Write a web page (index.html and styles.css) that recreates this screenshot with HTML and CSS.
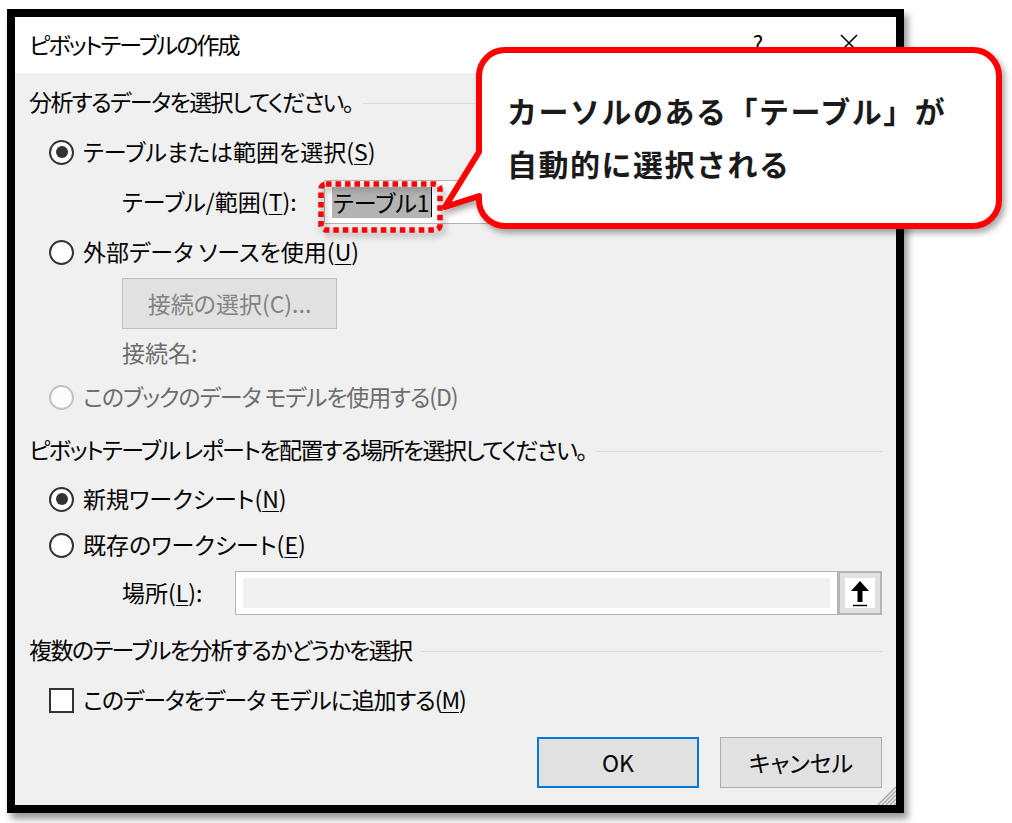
FILE: index.html
```html
<!DOCTYPE html>
<html lang="ja">
<head>
  <meta charset="UTF-8">
  <title>ピボットテーブルの作成</title>
  <link rel="stylesheet" href="styles.css">
</head>
<body>
  <div class="dialog">
    <!-- Title bar -->
    <div class="titlebar">
      <span class="title">ピボットテーブルの作成</span>
      <span class="help">?</span>
      <span class="close">
        <svg viewBox="0 0 20 20" width="20" height="20">
          <path d="M2,2 L18,18 M18,2 L2,18" stroke="#000" stroke-width="1.6" fill="none"></path>
        </svg>
      </span>
    </div>

    <div class="content">
      <!-- Source -->
      <div class="row group-head">
        <span>分析するデータを選択してください。</span>
        <i class="rule"></i>
      </div>

      <div class="row option option-tall mt-4">
        <span class="radio checked"></span>
        <span>テーブルまたは範囲を選択(<u>S</u>)</span>
      </div>

      <div class="row sub row-table mt-3">
        <span class="label-table">テーブル/範囲(<u>T</u>):</span>
        <div class="textbox">
          <span class="selection">テーブル1</span><span class="caret"></span>
        </div>
      </div>

      <div class="row option option-tall mt-3">
        <span class="radio"></span>
        <span>外部データ ソースを使用(<u>U</u>)</span>
      </div>

      <div class="row sub row-button mt-2">
        <button class="btn btn-disabled btn-connect" disabled>接続の選択(C)...</button>
      </div>

      <div class="row sub disabled-text row-short mt-6">接続名:</div>

      <div class="row option disabled-text mt-4">
        <span class="radio radio-disabled"></span>
        <span class="tight">このブックのデータ モデルを使用する(D)</span>
      </div>

      <!-- Destination -->
      <div class="row group-head mt-9">
        <span>ピボットテーブル レポートを配置する場所を選択してください。</span>
        <i class="rule"></i>
      </div>

      <div class="row option mt-5">
        <span class="radio checked"></span>
        <span>新規ワークシート(<u>N</u>)</span>
      </div>

      <div class="row option mt-2">
        <span class="radio"></span>
        <span>既存のワークシート(<u>E</u>)</span>
      </div>

      <div class="row sub mt-4">
        <span class="label-place">場所(<u>L</u>):</span>
        <div class="refedit">
          <div class="refedit-inner"></div>
        </div>
        <div class="ref-button">
          <svg viewBox="0 0 30 30" width="30" height="30">
            <rect x="0" y="0" width="30" height="30" fill="#fff"></rect>
            <path d="M15,3 L6,13 L12.5,13 L12.5,24 L17.5,24 L17.5,13 L24,13 Z" fill="#000"></path>
            <line x1="8" y1="27.5" x2="22" y2="27.5" stroke="#000" stroke-width="1.5"></line>
          </svg>
        </div>
      </div>

      <!-- Data model -->
      <div class="row group-head mt-13">
        <span>複数のテーブルを分析するかどうかを選択</span>
        <i class="rule"></i>
      </div>

      <div class="row option mt-6">
        <span class="checkbox"></span>
        <span class="tight">このデータをデータ モデルに追加する(<u>M</u>)</span>
      </div>

      <div class="actions">
        <button class="btn btn-default">OK</button>
        <button class="btn">キャンセル</button>
      </div>
    </div>

    <svg class="grip" viewBox="0 0 20 20" width="20" height="20">
      <path d="M20,2 L2,20 M20,6 L6,20 M20,10 L10,20 M20,14 L14,20 M20,18 L18,20" stroke="#a8a8a8" stroke-width="1.5"></path>
    </svg>
  </div>

  <!-- Annotation callout -->
  <svg class="annotation" viewBox="0 0 1012 823" width="1012" height="823">
    <rect x="321" y="184" width="119" height="46" rx="5" fill="none" stroke="#f00" stroke-width="5.5" stroke-dasharray="5.5 4"></rect>
    <path d="M505,50 H973 A26,26 0 0 1 999,76 V200 A26,26 0 0 1 973,226 H505 A26,26 0 0 1 479,200 V196 L445,207 L479,152 V76 A26,26 0 0 1 505,50 Z"
          fill="#fff" stroke="#f00" stroke-width="6" stroke-linejoin="round"></path>
  </svg>
  <div class="callout-text">
    カーソルのある「テーブル」が<br>
    自動的に選択される
  </div>
</body>
</html>
```

FILE: styles.css
```css
* {
  box-sizing: border-box;
}

body {
  margin: 0;
  background: #fff;
  font-family: "Noto Sans CJK JP", "Noto Sans", sans-serif;
  font-feature-settings: "palt";
  color: #000;
  position: relative;
  width: 1012px;
  height: 823px;
  overflow: hidden;
}

/* Dialog frame */
.dialog {
  position: relative;
  margin: 9px 0 0 7px;
  width: 897px;
  height: 804px;
  border: 8px solid #000;
  background: #f0f0f0;
  box-shadow: 4px 6px 7px rgba(0, 0, 0, 0.4);
  font-size: 23px;
  line-height: 1.3;
}

.titlebar {
  height: 56px;
  background: #fff;
  display: flex;
  align-items: center;
  padding: 0 24px 0 14px;
}

.title {
  letter-spacing: -2px;
}

.help {
  margin-left: auto;
  width: 30px;
  text-align: center;
  font-size: 22px;
  margin-top: -6px;
}

.close {
  width: 46px;
  margin-left: 53px;
  display: flex;
  justify-content: center;
  margin-top: -4px;
}

.content {
  padding: 7px 14px 0 14px;
}

/* Rows */
.row {
  display: flex;
  align-items: center;
  height: 44px;
  white-space: nowrap;
}

.mt-2 { margin-top: 2px; }
.mt-3 { margin-top: 3px; }
.mt-4 { margin-top: 4px; }
.mt-5 { margin-top: 5px; }
.mt-6 { margin-top: 6px; }
.mt-9 { margin-top: 9px; }
.mt-13 { margin-top: 13px; }

.group-head {
  gap: 10px;
  letter-spacing: -1.6px;
}

.rule {
  flex: 1;
  height: 1px;
  background: #dadada;
  margin-top: 2px;
}

.option {
  padding-left: 20px;
  gap: 9px;
}

.option-tall {
  height: 48px;
}

.tight {
  letter-spacing: -1.1px;
}

.sub {
  padding-left: 93px;
}

.row-table {
  height: 46px;
}

.row-button {
  height: 51px;
}

.row-short {
  height: 36px;
}

.disabled-text {
  color: #6d6d6d;
}

u {
  text-decoration-thickness: 1px;
  text-underline-offset: 3px;
}

/* Radio and checkbox */
.radio {
  width: 25px;
  height: 25px;
  border: 2px solid #333;
  border-radius: 50%;
  background: #fff;
  display: flex;
  align-items: center;
  justify-content: center;
  flex: none;
}

.radio.checked::after {
  content: "";
  width: 12px;
  height: 12px;
  border-radius: 50%;
  background: #333;
}

.radio-disabled {
  border-color: #c2c2c2;
  background: #fcfcfc;
}

.checkbox {
  width: 25px;
  height: 25px;
  border: 2px solid #333;
  background: #fff;
  flex: none;
}

/* Text boxes */
.label-table {
  width: 202px;
  flex: none;
}

.textbox {
  flex: 1;
  height: 44px;
  border: 1px solid #b4b4b4;
  background: #fff;
  display: flex;
  align-items: center;
  padding-left: 7px;
}

.selection {
  background: #b3b3b3;
  line-height: 31px;
  padding: 0 1px;
}

.caret {
  width: 1px;
  height: 30px;
  background: #000;
}

.label-place {
  width: 113px;
  flex: none;
}

.refedit {
  width: 603px;
  height: 44px;
  border: 1px solid #b4b4b4;
  background: #fff;
  padding: 6px 7px;
  flex: none;
}

.refedit-inner {
  height: 100%;
  background: #f0f0f0;
}

.ref-button {
  width: 44px;
  height: 44px;
  border: 2px solid #b4b4b4;
  background: #e1e1e1;
  display: flex;
  align-items: center;
  justify-content: center;
  flex: none;
}

/* Buttons */
.btn {
  font: inherit;
  font-size: 23px;
  color: #000;
  background: #e1e1e1;
  border: 1px solid #adadad;
  width: 162px;
  height: 51px;
  padding: 0;
}

.btn-default {
  border: 2px solid #0078d7;
}

.btn-connect {
  width: 215px;
}

.btn-disabled {
  color: #838383;
  border-color: #bfbfbf;
  background: #e1e1e1;
}

.actions {
  display: flex;
  justify-content: flex-end;
  gap: 21px;
  margin-top: 15px;
}

.grip {
  position: absolute;
  right: 0;
  bottom: 0;
}

/* Annotation */
.annotation {
  position: absolute;
  left: 0;
  top: 0;
  pointer-events: none;
  filter: drop-shadow(3px 4px 3px rgba(0, 0, 0, 0.35));
}

.callout-text {
  position: absolute;
  left: 507px;
  top: 84px;
  font-size: 30px;
  font-weight: 700;
  font-feature-settings: normal;
  letter-spacing: 1.5px;
  line-height: 53px;
  color: #1a1a1a;
  white-space: nowrap;
}
```
